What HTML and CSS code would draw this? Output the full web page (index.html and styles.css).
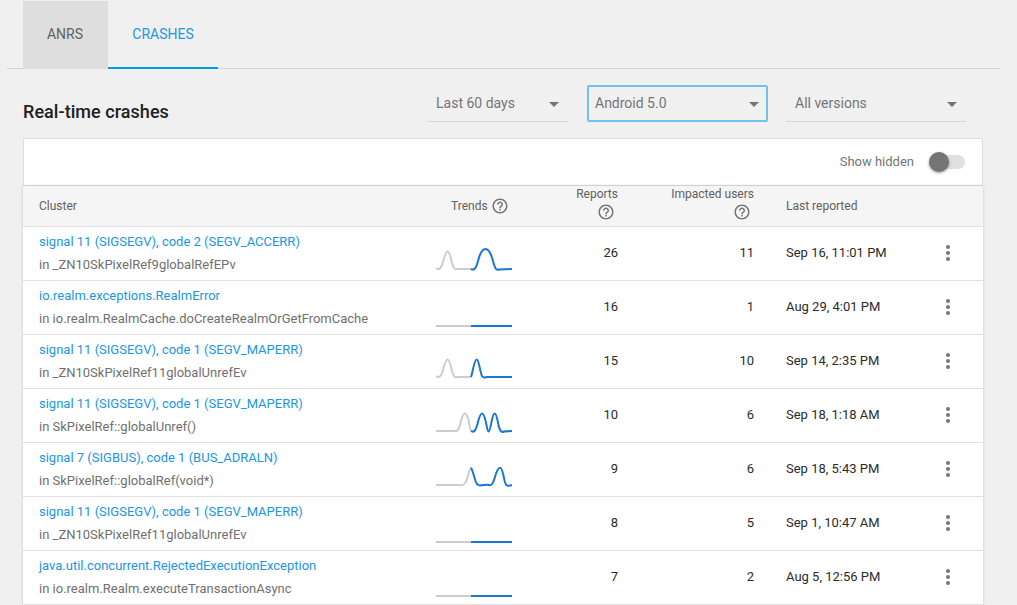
FILE: index.html
```html
<!DOCTYPE html>
<html lang="en">
<head>
<meta charset="utf-8">
<title>Real-time crashes</title>
<link rel="stylesheet" href="styles.css">
</head>
<body>
<svg class="defs" width="0" height="0" aria-hidden="true">
  <symbol id="help" viewBox="0 0 24 24"><path d="M11 18h2v-2h-2v2zm1-16C6.48 2 2 6.48 2 12s4.48 10 10 10 10-4.48 10-10S17.52 2 12 2zm0 18c-4.41 0-8-3.59-8-8s3.59-8 8-8 8 3.59 8 8-3.59 8-8 8zm0-14c-2.21 0-4 1.79-4 4h2c0-1.1.9-2 2-2s2 .9 2 2c0 2-3 1.75-3 5h2c0-2.25 3-2.5 3-5 0-2.21-1.79-4-4-4z"/></symbol>
  <symbol id="more" viewBox="0 0 4 16"><circle cx="2" cy="2" r="2"/><circle cx="2" cy="8" r="2"/><circle cx="2" cy="14" r="2"/></symbol>
</svg>
<nav class="tabs">
  <div class="tab tab-muted">ANRS</div>
  <div class="tab tab-active">CRASHES</div>
</nav>
<main class="content">
  <div class="filters">
    <h1 class="title">Real-time crashes</h1>
    <div class="select select-days"><span>Last 60 days</span><i class="caret"></i></div>
    <div class="select select-android"><span>Android 5.0</span><i class="caret"></i></div>
    <div class="select select-versions"><span>All versions</span><i class="caret"></i></div>
  </div>
  <div class="toolbar">
    <span class="toolbar-label">Show hidden</span>
    <div class="toggle"><div class="knob"></div></div>
  </div>
  <div class="table">
    <div class="row head">
      <div>Cluster</div>
      <div class="head-trends">Trends <svg class="help"><use href="#help"/></svg></div>
      <div class="num head-stack">Reports<svg class="help"><use href="#help"/></svg></div>
      <div class="num head-stack">Impacted users<svg class="help"><use href="#help"/></svg></div>
      <div class="date">Last reported</div>
      <div></div>
    </div>

    <div class="row">
      <div><a class="name">signal 11 (SIGSEGV), code 2 (SEGV_ACCERR)</a><div class="sub">in _ZN10SkPixelRef9globalRefEPv</div></div>
      <svg class="spark" viewBox="0 0 76 53"><path class="old" d="M0 41.5C3 43 5 42 7 35 8.500 29 10 24.500 11.500 24.500 13 24.500 14.500 29 16 36 17.500 42 19 43 22 42L35 42"/><path class="new" d="M35 42C38 43.500 40 42 42 34 44 26 46 22 49.500 22 53 22 55 26 57 34 59 42 60.500 43.500 63 42.500L76 42"/></svg>
      <div class="num">26</div><div class="num">11</div><div class="date">Sep 16, 11:01 PM</div>
      <svg class="more"><use href="#more"/></svg>
    </div>
    <div class="row">
      <div><a class="name">io.realm.exceptions.RealmError</a><div class="sub">in io.realm.RealmCache.doCreateRealmOrGetFromCache</div></div>
      <svg class="spark" viewBox="0 0 76 53"><path class="old" d="M0 45L35 45"/><path class="new" d="M35 45L76 45"/></svg>
      <div class="num">16</div><div class="num">1</div><div class="date">Aug 29, 4:01 PM</div>
      <svg class="more"><use href="#more"/></svg>
    </div>
    <div class="row">
      <div><a class="name">signal 11 (SIGSEGV), code 1 (SEGV_MAPERR)</a><div class="sub">in _ZN10SkPixelRef11globalUnrefEv</div></div>
      <svg class="spark" viewBox="0 0 76 53"><path class="old" d="M0 41.500C3 43 5 42 7 35 8.500 29 10 24.500 11.500 24.500 13 24.500 14.500 29 16 36 17.500 42 19 43 22 42L35 42"/><path class="new" d="M35 42C37 37 38 24.500 40.700 24.500 43 24.500 44 37 46 41 47.500 43.500 49 42.500 51 42L76 42"/></svg>
      <div class="num">15</div><div class="num">10</div><div class="date">Sep 14, 2:35 PM</div>
      <svg class="more"><use href="#more"/></svg>
    </div>
    <div class="row">
      <div><a class="name">signal 11 (SIGSEGV), code 1 (SEGV_MAPERR)</a><div class="sub">in SkPixelRef::globalUnref()</div></div>
      <svg class="spark" viewBox="0 0 76 53"><path class="old" d="M0 42L18 42C21 43 22.500 41 24 36 25.500 29 27 24.500 29 24.500 31 24.500 32.500 30 33.500 36 34 39 34.500 41 35 42"/><path class="new" d="M35 42C38 44 40 41 41.500 35 43 28.500 44.500 24.500 46 24.500 48 24.500 49.500 31 50.500 36 51.200 40 52 42.500 52.700 42.500 53.500 42.500 54.500 38 55.500 33 56.500 28 57.500 24.500 58.700 24.500 60.500 24.500 61.500 31 62.500 36 63.500 41 65 44 68 42.500L76 42"/></svg>
      <div class="num">10</div><div class="num">6</div><div class="date">Sep 18, 1:18 AM</div>
      <svg class="more"><use href="#more"/></svg>
    </div>
    <div class="row">
      <div><a class="name">signal 7 (SIGBUS), code 1 (BUS_ADRALN)</a><div class="sub">in SkPixelRef::globalRef(void*)</div></div>
      <svg class="spark" viewBox="0 0 76 53"><path class="old" d="M0 42L24 42C27 43 29 42 31 36 32.500 31 34 24.700 35 24.700"/><path class="new" d="M35 24.700C36.500 27 38 33 39.500 38 40.500 41 41.500 42.500 44 42.500 47 42 50 41.500 53 42 55 43 57 41 59 34 60.500 28.500 62 24.700 64 24.700 65.500 24.700 67 30 68 35 69 40.500 70.500 43 72 42.800 73.500 43 75 42.500 76 42"/></svg>
      <div class="num">9</div><div class="num">6</div><div class="date">Sep 18, 5:43 PM</div>
      <svg class="more"><use href="#more"/></svg>
    </div>
    <div class="row">
      <div><a class="name">signal 11 (SIGSEGV), code 1 (SEGV_MAPERR)</a><div class="sub">in _ZN10SkPixelRef11globalUnrefEv</div></div>
      <svg class="spark" viewBox="0 0 76 53"><path class="old" d="M0 45L35 45"/><path class="new" d="M35 45L76 45"/></svg>
      <div class="num">8</div><div class="num">5</div><div class="date">Sep 1, 10:47 AM</div>
      <svg class="more"><use href="#more"/></svg>
    </div>
    <div class="row">
      <div><a class="name">java.util.concurrent.RejectedExecutionException</a><div class="sub">in io.realm.Realm.executeTransactionAsync</div></div>
      <svg class="spark" viewBox="0 0 76 53"><path class="old" d="M0 45L35 45"/><path class="new" d="M35 45L76 45"/></svg>
      <div class="num">7</div><div class="num">2</div><div class="date">Aug 5, 12:56 PM</div>
      <svg class="more"><use href="#more"/></svg>
    </div>
  </div>
</main>
</body>
</html>
```
FILE: styles.css
```css
* { box-sizing: border-box; }
html, body { height: 605px; overflow: hidden; }
body {
  margin: 0;
  background: #f0f0f0;
  color: #2b2b2b;
  font-family: Roboto, "Liberation Sans", sans-serif;
  font-size: 13px;
}
.defs { position: absolute; }

.tabs {
  display: flex;
  height: 69px;
  margin: 0 17px 0 7px;
  padding: 1px 0 0 16px;
  border-bottom: 1px solid #d4d4d4;
}
.tab {
  display: flex;
  align-items: center;
  justify-content: center;
  height: 68px;
  padding-bottom: 3px;
  font-size: 14px;
}
.tab-muted { width: 85px; padding-right: 1px; background: #dedede; color: #616161; }
.tab-active { width: 110px; color: #2196e3; border-bottom: 2px solid #039be5; padding-bottom: 1px; }

.content { width: 960px; margin-left: 23px; }

.filters { display: flex; align-items: center; height: 37px; margin-top: 16px; }
.title { align-self: flex-end; width: 405px; margin: 0; font-size: 18px; line-height: 21px; font-weight: 500; letter-spacing: 0.05px; color: #212121; }
.select {
  position: relative;
  display: flex;
  align-items: center;
  justify-content: space-between;
  height: 37px;
  padding: 0 9px 1px 8px;
  color: #757575;
  font-size: 14px;
  border-bottom: 1px solid #d6d6d6;
}
.select-days { width: 140px; margin-right: 19px; }
.select-android { width: 181px; margin-right: 18px; border: 2px solid #71c3ee; border-radius: 2px; padding: 0 7px 1px 6px; }
.select-versions { width: 180px; padding: 0 9px 1px 9px; }
.caret {
  width: 0;
  height: 0;
  margin-top: 3px;
  border-left: 5px solid transparent;
  border-right: 5px solid transparent;
  border-top: 5px solid #757575;
}

.toolbar {
  display: flex;
  align-items: center;
  justify-content: flex-end;
  height: 48px;
  margin-top: 16px;
  padding-right: 17px;
  gap: 15px;
  background: #fff;
  border: 1px solid #dedede;
  color: #757575;
  font-size: 13px;
}
.toolbar-label { padding-bottom: 2px; }
.toggle { position: relative; width: 36px; height: 14px; border-radius: 7px; background: #e0e0e0; }
.knob {
  position: absolute;
  left: 0;
  top: -3px;
  width: 20px;
  height: 20px;
  border-radius: 50%;
  background: #757575;
  box-shadow: 0 1px 3px rgba(0, 0, 0, 0.4);
}

.table { background: #fff; box-shadow: 0 0 3px rgba(0, 0, 0, 0.16); }
.row {
  display: grid;
  grid-template-columns: 397px 76px 106px 136px 179px 30px;
  align-items: center;
  height: 54px;
  padding: 0 0 2px 16px;
  border-bottom: 1px solid #e0e0e0;
}
.head { height: 41px; padding-bottom: 0; background: #f5f5f5; font-size: 12px; color: #616161; }
.head-trends { display: flex; align-items: center; gap: 3px; padding-left: 15px; white-space: nowrap; }
.head-stack { align-self: start; display: flex; flex-direction: column; align-items: flex-end; white-space: nowrap; line-height: 16px; }
.head-stack .help { margin: 1px 3px 0 0; }
.help { width: 18px; height: 18px; fill: #757575; flex: none; }

.name { display: block; color: #2196e3; line-height: 23px; font-size: 13px; }
.sub { color: #707070; line-height: 23px; font-size: 13px; }
.num { text-align: right; }
.date { padding-left: 32px; }
.head .date { color: #616161; }
.spark { align-self: start; width: 76px; height: 53px; margin-bottom: -2px; display: block; fill: none; stroke-width: 2; }
.old { stroke: #cccccc; }
.new { stroke: #1976d2; }
.more { width: 4px; height: 16px; justify-self: center; fill: #757575; }
```
